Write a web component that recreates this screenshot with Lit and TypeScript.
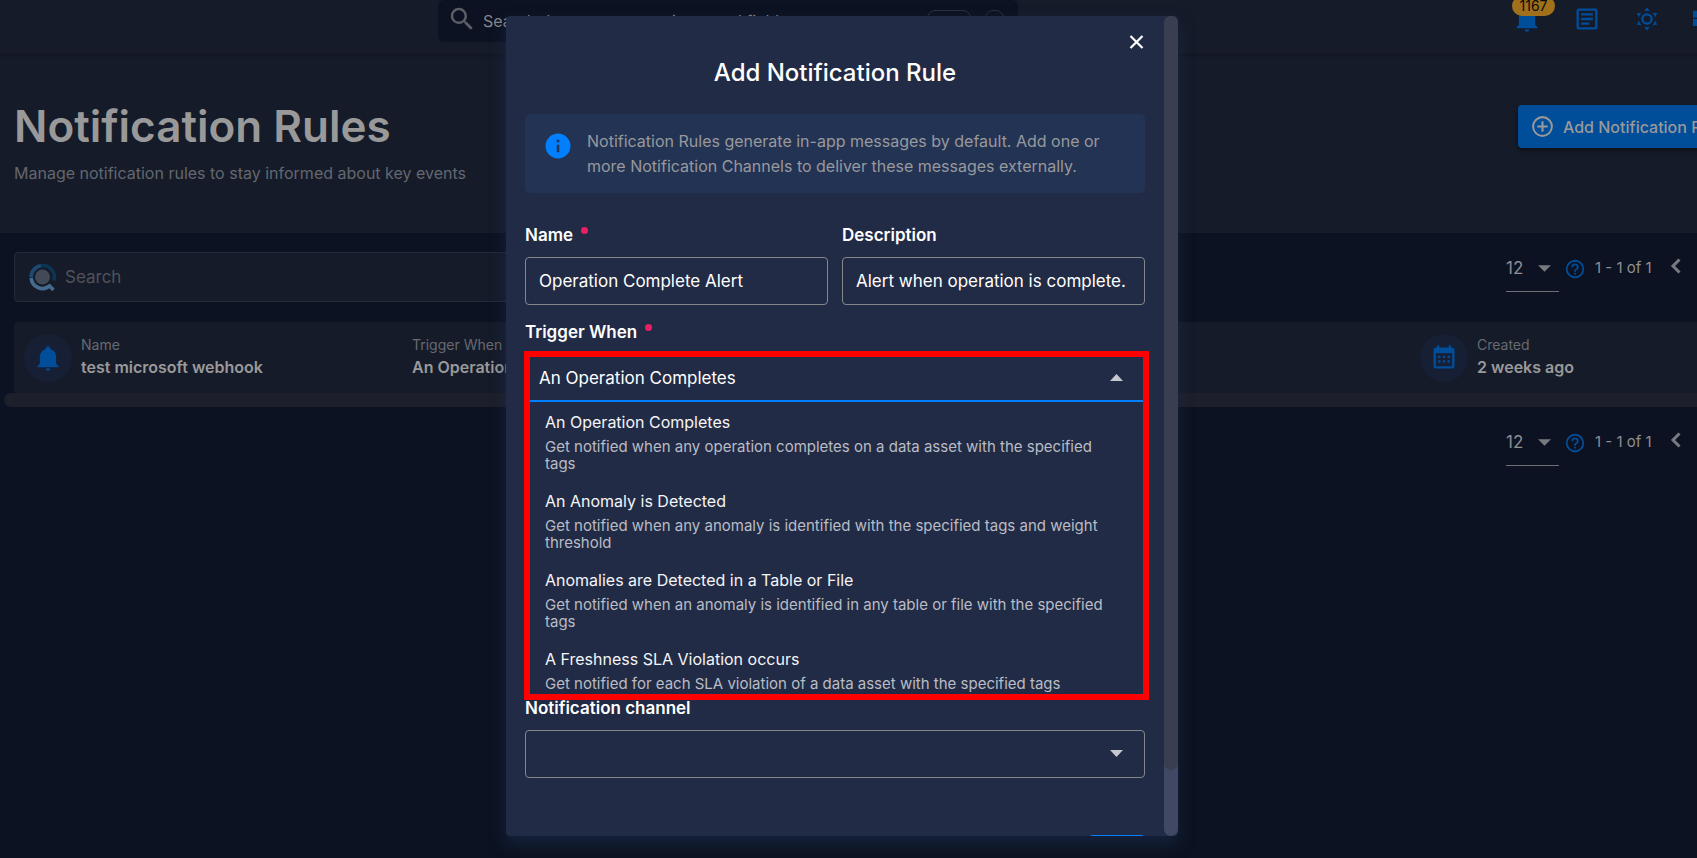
import { LitElement, html, css, svg } from "lit";
import { customElement } from "lit/decorators.js";

const bell = svg`<path d="M21 19v1H3v-1l2-2v-6c0-3.100 2.030-5.830 5-6.710V4a2 2 0 0 1 4 0v.29c2.970.880 5 3.610 5 6.710v6l2 2m-7 2a2 2 0 0 1-4 0"/>`;
const plusCircle = svg`<path d="M12 20c-4.410 0-8-3.590-8-8s3.590-8 8-8 8 3.590 8 8-3.590 8-8 8m0-18A10 10 0 0 0 2 12a10 10 0 0 0 10 10 10 10 0 0 0 10-10A10 10 0 0 0 12 2m1 5h-2v4H7v2h4v4h2v-4h4v-2h-4V7z"/>`;
const helpCircle = svg`<path d="M11 18h2v-2h-2v2m1-16A10 10 0 0 0 2 12a10 10 0 0 0 10 10 10 10 0 0 0 10-10A10 10 0 0 0 12 2m0 18c-4.410 0-8-3.590-8-8s3.590-8 8-8 8 3.590 8 8-3.590 8-8 8m0-14a4 4 0 0 0-4 4h2a2 2 0 0 1 2-2 2 2 0 0 1 2 2c0 2-3 1.750-3 5h2c0-2.250 3-2.500 3-5a4 4 0 0 0-4-4z"/>`;
const magnify = svg`<path d="M9.500 3A6.500 6.500 0 0 1 16 9.500c0 1.610-.59 3.090-1.560 4.230l.27.270h.79l5 5-1.500 1.500-5-5v-.79l-.27-.27A6.516 6.516 0 0 1 9.500 16 6.500 6.500 0 0 1 3 9.500 6.500 6.500 0 0 1 9.500 3m0 2C7 5 5 7 5 9.500S7 14 9.500 14 14 12 14 9.500 12 5 9.500 5z"/>`;
const notes = svg`<path d="M5 3c-1.110 0-2 .89-2 2v14c0 1.110.89 2 2 2h14c1.110 0 2-.89 2-2V5c0-1.110-.89-2-2-2H5m0 2h14v14H5V5m2 2v2h10V7H7m0 4v2h10v-2H7m0 4v2h7v-2H7z"/>`;
const sun = svg`<path d="M12 7a5 5 0 0 1 5 5 5 5 0 0 1-5 5 5 5 0 0 1-5-5 5 5 0 0 1 5-5m0 2a3 3 0 0 0-3 3 3 3 0 0 0 3 3 3 3 0 0 0 3-3 3 3 0 0 0-3-3m0-7 2.390 3.420C13.650 5.150 12.840 5 12 5s-1.650.15-2.390.42L12 2M3.340 7l4.160-.35A7.200 7.200 0 0 0 5.940 8.500c-.44.740-.69 1.500-.83 2.290L3.340 7m.02 10 1.760-3.770a7.131 7.131 0 0 0 2.380 4.140L3.360 17M20.650 7l-1.770 3.790a7.023 7.023 0 0 0-2.380-4.150l4.150.36m-.01 10-4.140.36c.59-.51 1.120-1.140 1.540-1.860.42-.73.690-1.500.83-2.290L20.640 17M12 22l-2.410-3.440c.740.270 1.550.44 2.410.44.820 0 1.630-.17 2.370-.44L12 22z"/>`;
const calendar = svg`<path d="M19 3h-1V1h-2v2H8V1H6v2H5a2 2 0 0 0-2 2v14a2 2 0 0 0 2 2h14a2 2 0 0 0 2-2V5a2 2 0 0 0-2-2M5 19V8h14v11H5m2-9h2v2H7v-2m4 0h2v2h-2v-2m4 0h2v2h-2v-2m-8 4h2v2H7v-2m4 0h2v2h-2v-2m4 0h2v2h-2v-2z"/>`;
const info = svg`<path d="M13 9h-2V7h2m0 10h-2v-6h2m-1-9A10 10 0 0 0 2 12a10 10 0 0 0 10 10 10 10 0 0 0 10-10A10 10 0 0 0 12 2z"/>`;

interface TriggerOption {
  title: string;
  text: string;
}

const triggers: TriggerOption[] = [
  { title: "An Operation Completes", text: "Get notified when any operation completes on a data asset with the specified tags" },
  { title: "An Anomaly is Detected", text: "Get notified when any anomaly is identified with the specified tags and weight threshold" },
  { title: "Anomalies are Detected in a Table or File", text: "Get notified when an anomaly is identified in any table or file with the specified tags" },
  { title: "A Freshness SLA Violation occurs", text: "Get notified for each SLA violation of a data asset with the specified tags" },
];

const base = css`
  *, *::before, *::after { box-sizing: border-box; }
  h1, h2, p, ul { margin: 0; padding: 0; }
  button, input, select { font: inherit; color: inherit; margin: 0; }
  button { cursor: pointer; border: 0; background: none; padding: 0; }
  svg { display: block; fill: currentColor; flex: none; }
`;

@customElement("page-range")
export class PageRange extends LitElement {
  static styles = [base, css`
    :host { display: flex; align-items: flex-start; height: 50px; color: #8d8f93; font-size: 17px; flex: none; width: 272px; }
    .size { position: relative; display: flex; width: 53px; height: 40px; border-bottom: 1px solid #6d7077; }
    select { appearance: none; border: 0; outline: 0; background: none; width: 100%; padding: 0 0 8px; }
    .caret { position: absolute; right: 8px; top: 13px; pointer-events: none; color: #777a80; }
    .help { margin: 6px 9px 0 5px; color: #004d99; }
    .range { line-height: 32px; width: 66px; white-space: nowrap; font-size: 15px; }
    .nav { width: 26px; height: 24px; margin: 2px 10px 0 0; color: #777a80; }
  `];
  render() {
    return html`
      <div class="size">
        <select aria-label="Items per page"><option>12</option></select>
        <svg class="caret" width="13" height="7" viewBox="0 0 14 7"><path d="M0 0h14L7 7z"/></svg>
      </div>
      <svg class="help" width="22" height="22" viewBox="0 0 24 24">${helpCircle}</svg>
      <span class="range">1 - 1 of 1</span>
      <button class="nav" aria-label="Previous page">
        <svg width="26" height="24" viewBox="0 0 26 24"><path d="M18.500 5.500 12 12l6.500 6.500" fill="none" stroke="currentColor" stroke-width="3"/></svg>
      </button>
      <button class="nav" aria-label="Next page">
        <svg width="26" height="24" viewBox="0 0 26 24"><path d="M9 5.500 15.500 12 9 18.500" fill="none" stroke="currentColor" stroke-width="3"/></svg>
      </button>`;
  }
}

@customElement("rule-dialog")
export class RuleDialog extends LitElement {
  static styles = [base, css`
    :host {
      display: flex; width: 672px; max-width: 100%; height: 100%;
      border-radius: 4px; overflow: hidden; background: #222b45; color: #fff;
      font-size: 17px; box-shadow: 0 8px 16px rgba(30, 52, 88, .5);
    }
    .body { flex: 1; min-width: 0; padding: 14px 19px 0; overflow: hidden; }
    .top { display: flex; justify-content: flex-end; height: 27px; }
    .close { width: 17px; height: 24px; }
    h2 { font-size: 24px; font-weight: 500; line-height: 32px; text-align: center; }
    .note {
      display: flex; gap: 14px; margin: 25px 0 30px; padding: 15px 20px 14px 18px;
      border-radius: 5px; background: #233354; color: #98999c; line-height: 25px; font-size: 16px;
    }
    .note svg { color: #007fff; margin-top: 2px; }
    .pair { display: grid; grid-template-columns: 1fr 1fr; gap: 14px; margin-bottom: 15px; }
    .label { display: flex; gap: 8px; height: 24px; margin-bottom: 10px; line-height: 24px; font-size: 17px; font-weight: 600; }
    .dot { width: 7px; height: 7px; margin-top: 4px; border-radius: 50%; background: #e91e63; }
    .field {
      display: block; width: 100%; height: 48px; padding: 0 13px; outline: 0;
      border: 1px solid #85868a; border-radius: 4px; background: none; appearance: none;
    }
    .picker { position: relative; }
    .picker svg { position: absolute; right: 22px; top: 20px; color: #c5c7ce; pointer-events: none; }
    .open .field { border-bottom: 2px solid #007fff; border-radius: 4px 4px 0 0; }
    .marked { position: relative; }
    .marked::after {
      content: ""; position: absolute; inset: -3px -4px -4px -1px;
      border: 6px solid #f00; pointer-events: none;
    }
    .menu { list-style: none; height: 294px; overflow: hidden; }
    .menu li { padding: 8px 20px 9px; height: 79px; }
    .choice { line-height: 24px; margin-bottom: 4px; color: #f4f5f7; font-size: 16px; }
    .hint { font-size: 15px; line-height: 17px; color: #b9bcc5; }
    .actions { display: flex; justify-content: flex-end; margin-top: 57px; }
    .save { height: 43px; width: 56px; border-radius: 4px; background: #007fff; }
    .rail { width: 14px; border-radius: 7px; background: #404864; }
    .thumb { height: 92%; border-radius: 7px; background: #393e50; }
  `];
  render() {
    return html`
      <div class="body">
        <div class="top">
          <button class="close" aria-label="Close">
            <svg width="17" height="24" viewBox="0 0 17 24"><path d="M2.500 6l12 12m0-12l-12 12" stroke="currentColor" stroke-width="2.200"/></svg>
          </button>
        </div>
        <h2>Add Notification Rule</h2>
        <div class="note">
          <svg width="30" height="30" viewBox="0 0 24 24">${info}</svg>
          <p>Notification Rules generate in-app messages by default. Add one or more Notification Channels to deliver these messages externally.</p>
        </div>
        <div class="pair">
          <div>
            <label class="label" for="name">Name <span class="dot"></span></label>
            <input class="field" id="name" value="Operation Complete Alert" />
          </div>
          <div>
            <label class="label" for="description">Description</label>
            <input class="field" id="description" value="Alert when operation is complete." />
          </div>
        </div>
        <label class="label" for="trigger">Trigger When <span class="dot"></span></label>
        <div class="marked">
          <div class="picker open">
            <select class="field" id="trigger">${triggers.map((t) => html`<option>${t.title}</option>`)}</select>
            <svg width="13" height="7" viewBox="0 0 13 7"><path d="M0 7h13L6.500 0z"/></svg>
          </div>
          <ul class="menu" role="listbox" aria-label="Trigger When">
            ${triggers.map((t) => html`
              <li role="option" aria-selected="false"><p class="choice">${t.title}</p><p class="hint">${t.text}</p></li>`)}
          </ul>
        </div>
        <label class="label" for="channel">Notification channel</label>
        <div class="picker">
          <select class="field" id="channel"><option></option></select>
          <svg width="13" height="7" viewBox="0 0 13 7"><path d="M0 0h13L6.500 7z"/></svg>
        </div>
        <div class="actions"><button class="save" aria-label="Save"></button></div>
      </div>
      <div class="rail"><div class="thumb"></div></div>`;
  }
}

@customElement("app-root")
export class AppRoot extends LitElement {
  static styles = [base, css`
    :host {
      display: block; position: relative; height: 100vh; overflow: hidden;
      background: #0c1221; color: #999; font-family: Inter, "Open Sans", sans-serif; font-size: 17px;
    }
    .page { width: calc(100% + 81px); }
    header {
      display: flex; align-items: flex-start; height: 54px; padding-left: 438px;
      background: #151b29; box-shadow: 0 1px 3px rgba(0, 0, 0, .25); position: relative;
    }
    .find { display: flex; align-items: center; gap: 6px; width: 580px; height: 42px; padding: 0 14px 5px 9px; border-radius: 6px; background: #0c1221; font-size: 16px; }
    .find svg { color: #5c5f67; }
    .find input { flex: 1; min-width: 0; border: 0; outline: 0; background: none; padding: 4px 0 0; }
    .find input::placeholder { color: #85878b; opacity: 1; }
    .key { height: 22px; border: 1px solid #2b303e; border-radius: 8px; width: 44px; margin-top: 5px; }
    .key.small { width: 19px; margin-left: 8px; }
    .tools { display: flex; gap: 32px; margin-left: auto; padding: 5px 57px 0 0; color: #004d99; }
    .tools button { position: relative; color: inherit; width: 28px; height: 28px; }
    .badge {
      position: absolute; left: -1px; bottom: 17px; width: 43px; height: 20px; border-radius: 10px;
      background: #a1701c; color: #0d0b06; font-size: 14px; line-height: 20px; text-align: center;
    }
    .hero { display: flex; justify-content: space-between; align-items: flex-start; padding: 44px 14px 48px; background: #151b29; }
    h1 { font-size: 44px; line-height: 56px; font-weight: 600; margin-bottom: 7px; }
    .sub { color: #63676f; line-height: 24px; font-size: 16px; }
    .add {
      display: flex; align-items: center; gap: 8px; width: 246px; height: 43px; margin-top: 7px; padding-left: 12px;
      border-radius: 4px; background: #004d99; color: #999; font-weight: 500; white-space: nowrap; font-size: 16px;
      box-shadow: 0 2px 4px rgba(0, 0, 0, .5);
    }
    .bar { display: flex; justify-content: space-between; padding: 19px 0 20px 14px; }
    .search { display: flex; align-items: center; gap: 8px; width: 560px; height: 50px; padding: 0 13px; border: 1px solid #232a39; border-radius: 4px; background: #151b29; }
    .search input { border: 0; outline: 0; background: none; padding: 0; }
    .search input::placeholder { color: #505359; opacity: 1; }
    .card { display: flex; align-items: center; height: 71px; margin: 0 14px; padding: 0 10px; background: #151b29; border-radius: 4px; }
    .cell { display: flex; align-items: center; gap: 9px; }
    .name { width: 388px; }
    .created { margin-left: auto; width: 334px; }
    .disc { display: grid; place-items: center; width: 48px; height: 48px; border-radius: 50%; background: #161f34; color: #004d99; }
    .key-text { font-size: 14px; line-height: 20px; color: #676a71; }
    .val { font-size: 16px; line-height: 24px; font-weight: 600; color: #999; padding-bottom: 2px; }
    .track { height: 14px; margin: 0 0 19px 4px; border-radius: 7px; background: #1d1f2a; }
    .foot { display: flex; justify-content: flex-end; }
    .overlay { position: absolute; inset: 0; display: flex; justify-content: center; padding: 16px 13px 22px 0; }
  `];
  render() {
    return html`
      <div class="page">
        <header>
          <div class="find">
            <svg width="30" height="30" viewBox="0 0 24 24">${magnify}</svg>
            <input aria-label="Search everything" placeholder="Search datastores, containers and fields" />
            <span class="key"></span><span class="key small"></span>
          </div>
          <div class="tools">
            <button aria-label="Notifications"><svg width="28" height="28" viewBox="0 0 24 24">${bell}</svg><span class="badge">1167</span></button>
            <button aria-label="Logs"><svg width="28" height="28" viewBox="0 0 24 24">${notes}</svg></button>
            <button aria-label="Theme"><svg width="28" height="28" viewBox="0 0 24 24">${sun}</svg></button>
            <button aria-label="Apps"><svg width="28" height="28" viewBox="0 0 24 24"><path d="M0 5h7v6H0zM8 5h7v6H8zM0 12h7v6H0zM8 12h7v6H8z"/></svg></button>
          </div>
        </header>
        <section class="hero">
          <div>
            <h1>Notification Rules</h1>
            <p class="sub">Manage notification rules to stay informed about key events</p>
          </div>
          <button class="add"><svg width="25" height="25" viewBox="0 0 24 24">${plusCircle}</svg>Add Notification Rule</button>
        </section>
        <div class="bar">
          <div class="search">
            <svg width="29" height="29" viewBox="0 0 29 29">
              <circle cx="14.500" cy="14" r="7.500" fill="#434a57"/>
              <g fill="none" stroke-width="3.600">
                <path d="M3.200 14.500A11.300 11.300 0 0 1 13 2.800" stroke="#1d4a70"/>
                <path d="M13 2.800A11.300 11.300 0 0 1 25.800 17.500" stroke="#0d3453"/>
                <path d="M3.200 15A11.300 11.300 0 0 0 21.500 23l4 4" stroke="#466b8e"/>
              </g>
            </svg>
            <input aria-label="Search rules" placeholder="Search" />
          </div>
          <page-range></page-range>
        </div>
        <div class="card">
          <div class="cell name">
            <span class="disc"><svg width="28" height="28" viewBox="0 0 24 24">${bell}</svg></span>
            <div><p class="key-text">Name</p><p class="val">test microsoft webhook</p></div>
          </div>
          <div class="cell">
            <div><p class="key-text">Trigger When</p><p class="val">An Operation Completes</p></div>
          </div>
          <div class="cell created">
            <span class="disc"><svg width="28" height="28" viewBox="0 0 24 24">${calendar}</svg></span>
            <div><p class="key-text">Created</p><p class="val">2 weeks ago</p></div>
          </div>
        </div>
        <div class="track"></div>
        <div class="foot"><page-range></page-range></div>
      </div>
      <div class="overlay"><rule-dialog role="dialog" aria-label="Add Notification Rule"></rule-dialog></div>`;
  }
}
